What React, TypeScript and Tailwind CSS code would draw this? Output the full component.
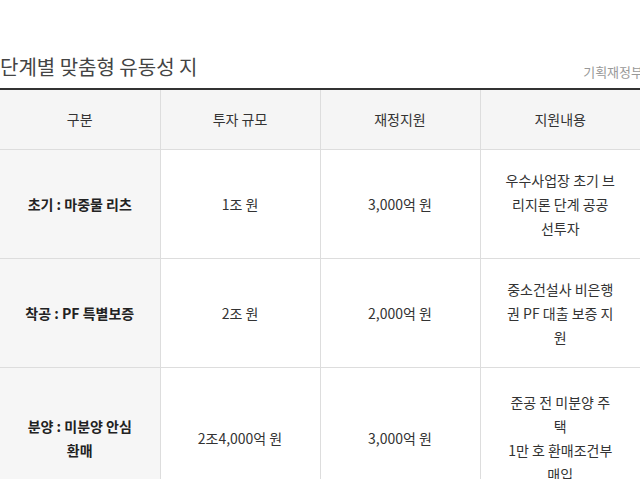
import React from "react";

type Row = {
  stage: string;
  scale: string;
  fund: string;
  detail: string[];
};

// detail lines follow the wrapping seen in the source table
const rows: Row[] = [
  {
    stage: "초기 : 마중물 리츠",
    scale: "1조 원",
    fund: "3,000억 원",
    detail: ["우수사업장 초기 브", "리지론 단계 공공", "선투자"],
  },
  {
    stage: "착공 : PF 특별보증",
    scale: "2조 원",
    fund: "2,000억 원",
    detail: ["중소건설사 비은행", "권 PF 대출 보증 지", "원"],
  },
  {
    stage: "분양 : 미분양 안심 환매",
    scale: "2조4,000억 원",
    fund: "3,000억 원",
    detail: ["준공 전 미분양 주", "택", "1만 호 환매조건부", "매입"],
  },
];

const headers = ["구분", "투자 규모", "재정지원", "지원내용"];

const App = () => {
  return (
    <div
      className="w-[640px] h-[479px] overflow-hidden bg-white text-[#333]"
      style={{ fontFamily: '"Noto Sans CJK KR", "Noto Sans", sans-serif' }}
    >
      <div className="pt-[52px]">
        {/* TITLE */}
        <div className="flex items-end justify-between mb-[6px]">
          <h2 className="text-[20px] leading-[30px] font-normal text-[#444] whitespace-nowrap">
            단계별 맞춤형 유동성 지
          </h2>
          <span className="text-[13px] leading-[18px] text-[#999] mr-[-3px] mb-[1px] whitespace-nowrap">
            기획재정부
          </span>
        </div>

        {/* TABLE */}
        <table className="w-[640px] table-fixed border-collapse border-t-2 border-[#333] text-[14px]">
          <thead>
            <tr className="h-[60px] bg-[#f5f5f5]">
              {headers.map((h, i) => (
                <th
                  key={h}
                  className={`font-normal text-center align-middle border-b border-[#ddd] ${
                    i > 0 ? "border-l" : ""
                  }`}
                >
                  {h}
                </th>
              ))}
            </tr>
          </thead>
          <tbody>
            {rows.map((row, idx) => (
              <tr key={row.stage} className={idx === rows.length - 1 ? "h-[142px]" : ""}>
                <td className="bg-[#f6f6f6] font-bold text-[#222] text-center align-middle px-[22px] py-[18px] leading-[24px] border-b border-[#ddd]">
                  {row.stage}
                </td>
                <td className="text-center align-middle px-[22px] py-[18px] leading-[24px] border-b border-l border-[#ddd]">
                  {row.scale}
                </td>
                <td className="text-center align-middle px-[22px] py-[18px] leading-[24px] border-b border-l border-[#ddd]">
                  {row.fund}
                </td>
                <td className="text-center align-middle px-[10px] py-[18px] leading-[24px] border-b border-l border-[#ddd] whitespace-nowrap">
                  {row.detail.map((line, i) => (
                    <React.Fragment key={i}>
                      {i > 0 && <br />}
                      {line}
                    </React.Fragment>
                  ))}
                </td>
              </tr>
            ))}
          </tbody>
        </table>
      </div>
    </div>
  );
};

export default App;
